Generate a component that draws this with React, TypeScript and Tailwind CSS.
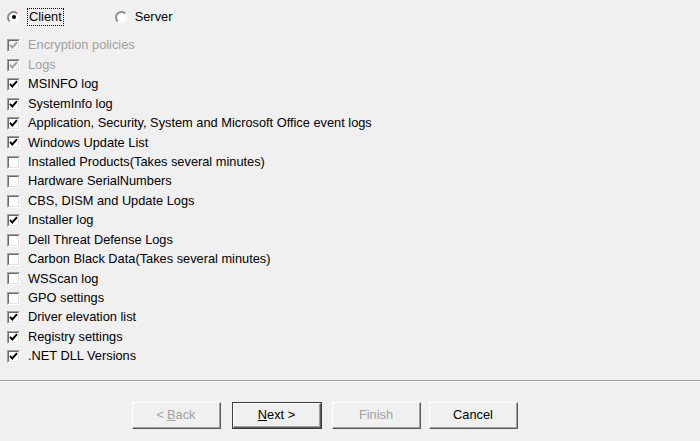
import React from "react";

const ITEMS: { label: string; checked: boolean; disabled?: boolean }[] = [
  { label: "Encryption policies", checked: true, disabled: true },
  { label: "Logs", checked: true, disabled: true },
  { label: "MSINFO log", checked: true },
  { label: "SystemInfo log", checked: true },
  { label: "Application, Security, System and Microsoft Office event logs", checked: true },
  { label: "Windows Update List", checked: true },
  { label: "Installed Products(Takes several minutes)", checked: false },
  { label: "Hardware SerialNumbers", checked: false },
  { label: "CBS, DISM and Update Logs", checked: false },
  { label: "Installer log", checked: true },
  { label: "Dell Threat Defense Logs", checked: false },
  { label: "Carbon Black Data(Takes several minutes)", checked: false },
  { label: "WSScan log", checked: false },
  { label: "GPO settings", checked: false },
  { label: "Driver elevation list", checked: true },
  { label: "Registry settings", checked: true },
  { label: ".NET DLL Versions", checked: true },
];

function CheckBox({ checked, disabled }: { checked: boolean; disabled?: boolean }) {
  return (
    <div className="relative w-[13px] h-[13px] shrink-0 border-t border-l border-t-[#a0a0a0] border-l-[#a0a0a0] border-b border-r border-b-white border-r-white">
      <div className={`w-full h-full border-t border-l border-t-[#696969] border-l-[#696969] border-b border-r border-b-[#e3e3e3] border-r-[#e3e3e3] ${disabled ? "bg-[#f4f4f4]" : "bg-white"}`} />
      {checked && (
        <svg className="absolute left-[-1px] top-[-1px]" width="13" height="13" viewBox="0 0 13 13">
          <polyline points="3,5.8 5.3,8.4 10,3.2" fill="none" stroke={disabled ? "#a0a0a0" : "#000"} strokeWidth="2" />
        </svg>
      )}
    </div>
  );
}

function Radio({ checked }: { checked: boolean }) {
  return (
    <div className="relative w-[13px] h-[13px] rounded-full bg-white border-2 border-t-[#8a8a8a] border-l-[#8a8a8a] border-b-[#f8f8f8] border-r-[#f8f8f8] flex items-center justify-center">
      {checked && <div className="w-[4px] h-[4px] rounded-full bg-black" />}
    </div>
  );
}

function WinButton({ children, disabled, isDefault }: { children: React.ReactNode; disabled?: boolean; isDefault?: boolean }) {
  return (
    <div className={`h-[27px] flex ${isDefault ? "border border-[#3c3c3c]" : ""}`}>
      <div className="flex-1 border-t border-l border-t-white border-l-white border-b border-r border-b-[#5a5a5a] border-r-[#5a5a5a]">
        <div className={`h-full flex items-center justify-center border-b border-r border-b-[#a0a0a0] border-r-[#a0a0a0] bg-[#f0f0f0] ${disabled ? "text-[#a0a0a0]" : "text-black"}`}>
          {children}
        </div>
      </div>
    </div>
  );
}

export default function App() {
  return (
    <div className="w-[700px] h-[441px] bg-[#f0f0f0] flex flex-col text-[12.8px] leading-none text-black [font-family:'Liberation_Sans',Arial,sans-serif] overflow-hidden">
      {/* Client / Server */}
      <div className="flex items-center h-[18px] mt-[8px] pl-[7px]">
        <Radio checked />
        <span className="ml-[7px] h-[18px] px-[1px] flex items-center border border-dotted border-black">Client</span>
        <div className="ml-[51px]">
          <Radio checked={false} />
        </div>
        <span className="ml-[7px]">Server</span>
      </div>

      {/* Options */}
      <div className="flex flex-col mt-[10px] pl-[7px]">
        {ITEMS.map((it) => (
          <div key={it.label} className="flex items-center h-[19.45px]">
            <CheckBox checked={it.checked} disabled={it.disabled} />
            <span className={`ml-[8px] whitespace-nowrap ${it.disabled ? "text-[#a0a0a0]" : ""}`}>{it.label}</span>
          </div>
        ))}
      </div>

      {/* Separator */}
      <div className="mt-auto">
        <div className="h-px bg-[#a0a0a0]" />
        <div className="h-px bg-white" />
      </div>

      {/* Buttons */}
      <div className="flex items-center pl-[132px] mt-[20px] mb-[12px]">
        <div className="w-[89px]">
          <WinButton disabled>
            &lt; <span className="underline ml-[3px]">B</span>ack
          </WinButton>
        </div>
        <div className="w-[90px] ml-[11px]">
          <WinButton isDefault>
            <span className="underline">N</span>ext &gt;
          </WinButton>
        </div>
        <div className="w-[89px] ml-[10px]">
          <WinButton disabled>Finish</WinButton>
        </div>
        <div className="w-[89px] ml-[8px]">
          <WinButton>Cancel</WinButton>
        </div>
      </div>
    </div>
  );
}
